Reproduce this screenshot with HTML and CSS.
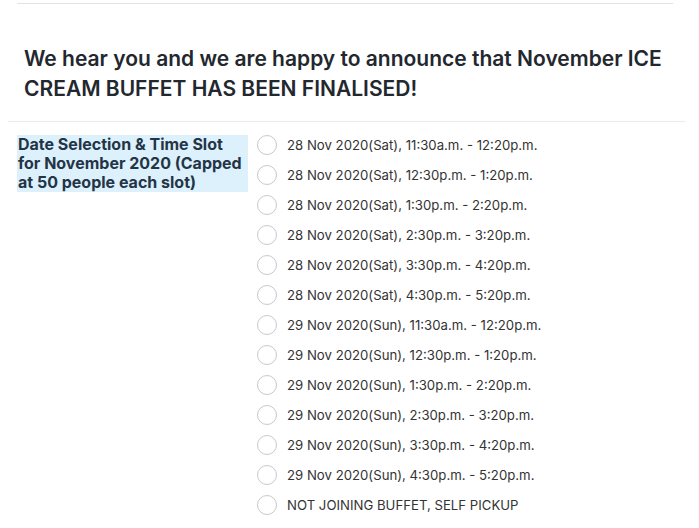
FILE: index.html
```html
<!DOCTYPE html>
<html>
<head>
<meta charset="utf-8">
<link rel="stylesheet" href="styles.css">
</head>
<body>
<div class="page">
  <hr class="top-rule">
  <h2 class="announce">We hear you and we are happy to announce that November ICE CREAM BUFFET HAS BEEN FINALISED!</h2>
  <hr class="mid-rule">
  <div class="field">
    <div class="label-col"><span class="label">Date Selection &amp; Time Slot for November 2020 (Capped at 50 people each slot)</span></div>
    <ul class="options">
      <li class="opt"><span class="radio"></span><span class="txt">28 Nov 2020(Sat), 11:30a.m. - 12:20p.m.</span></li>
      <li class="opt"><span class="radio"></span><span class="txt">28 Nov 2020(Sat), 12:30p.m. - 1:20p.m.</span></li>
      <li class="opt"><span class="radio"></span><span class="txt">28 Nov 2020(Sat), 1:30p.m. - 2:20p.m.</span></li>
      <li class="opt"><span class="radio"></span><span class="txt">28 Nov 2020(Sat), 2:30p.m. - 3:20p.m.</span></li>
      <li class="opt"><span class="radio"></span><span class="txt">28 Nov 2020(Sat), 3:30p.m. - 4:20p.m.</span></li>
      <li class="opt"><span class="radio"></span><span class="txt">28 Nov 2020(Sat), 4:30p.m. - 5:20p.m.</span></li>
      <li class="opt"><span class="radio"></span><span class="txt">29 Nov 2020(Sun), 11:30a.m. - 12:20p.m.</span></li>
      <li class="opt"><span class="radio"></span><span class="txt">29 Nov 2020(Sun), 12:30p.m. - 1:20p.m.</span></li>
      <li class="opt"><span class="radio"></span><span class="txt">29 Nov 2020(Sun), 1:30p.m. - 2:20p.m.</span></li>
      <li class="opt"><span class="radio"></span><span class="txt">29 Nov 2020(Sun), 2:30p.m. - 3:20p.m.</span></li>
      <li class="opt"><span class="radio"></span><span class="txt">29 Nov 2020(Sun), 3:30p.m. - 4:20p.m.</span></li>
      <li class="opt"><span class="radio"></span><span class="txt">29 Nov 2020(Sun), 4:30p.m. - 5:20p.m.</span></li>
      <li class="opt"><span class="radio"></span><span class="txt">NOT JOINING BUFFET, SELF PICKUP</span></li>
    </ul>
  </div>
</div>
</body>
</html>
```

FILE: styles.css
```css
html, body {
  margin: 0;
  padding: 0;
  background: #ffffff;
}
body {
  font-family: Inter, "Liberation Sans", sans-serif;
  color: #333333;
}
.page {
  padding: 0 13px 0 8px;
}
.top-rule {
  margin: 3px 13px 0 9px;
  border: 0;
  border-top: 1px solid #e3e3e3;
  height: 0;
}
.announce {
  margin: 0;
  padding: 40px 16px 17px 16px;
  font-size: 21px;
  font-weight: 600;
  line-height: 30px;
  color: #23272e;
}
.mid-rule {
  margin: 0;
  border: 0;
  border-top: 1px solid #ececec;
  height: 0;
}
.field {
  display: flex;
  align-items: flex-start;
  padding: 8px 0 0 9px;
}
.label-col {
  width: 231px;
  flex: none;
  margin-top: 5px;
}
.label {
  display: block;
  background: #dcf1fb;
  font-size: 16px;
  font-weight: 700;
  line-height: 19px;
  color: #243447;
  padding: 0 0 0 1px;
}
.options {
  list-style: none;
  margin: 0;
  padding: 0 0 0 9px;
}
.opt {
  display: flex;
  align-items: center;
  height: 30px;
}
.radio {
  width: 18px;
  height: 18px;
  border: 1px solid #c9c9c9;
  border-radius: 50%;
  flex: none;
  margin-right: 10px;
}
.txt {
  font-size: 13.2px;
  color: #333333;
}
```
